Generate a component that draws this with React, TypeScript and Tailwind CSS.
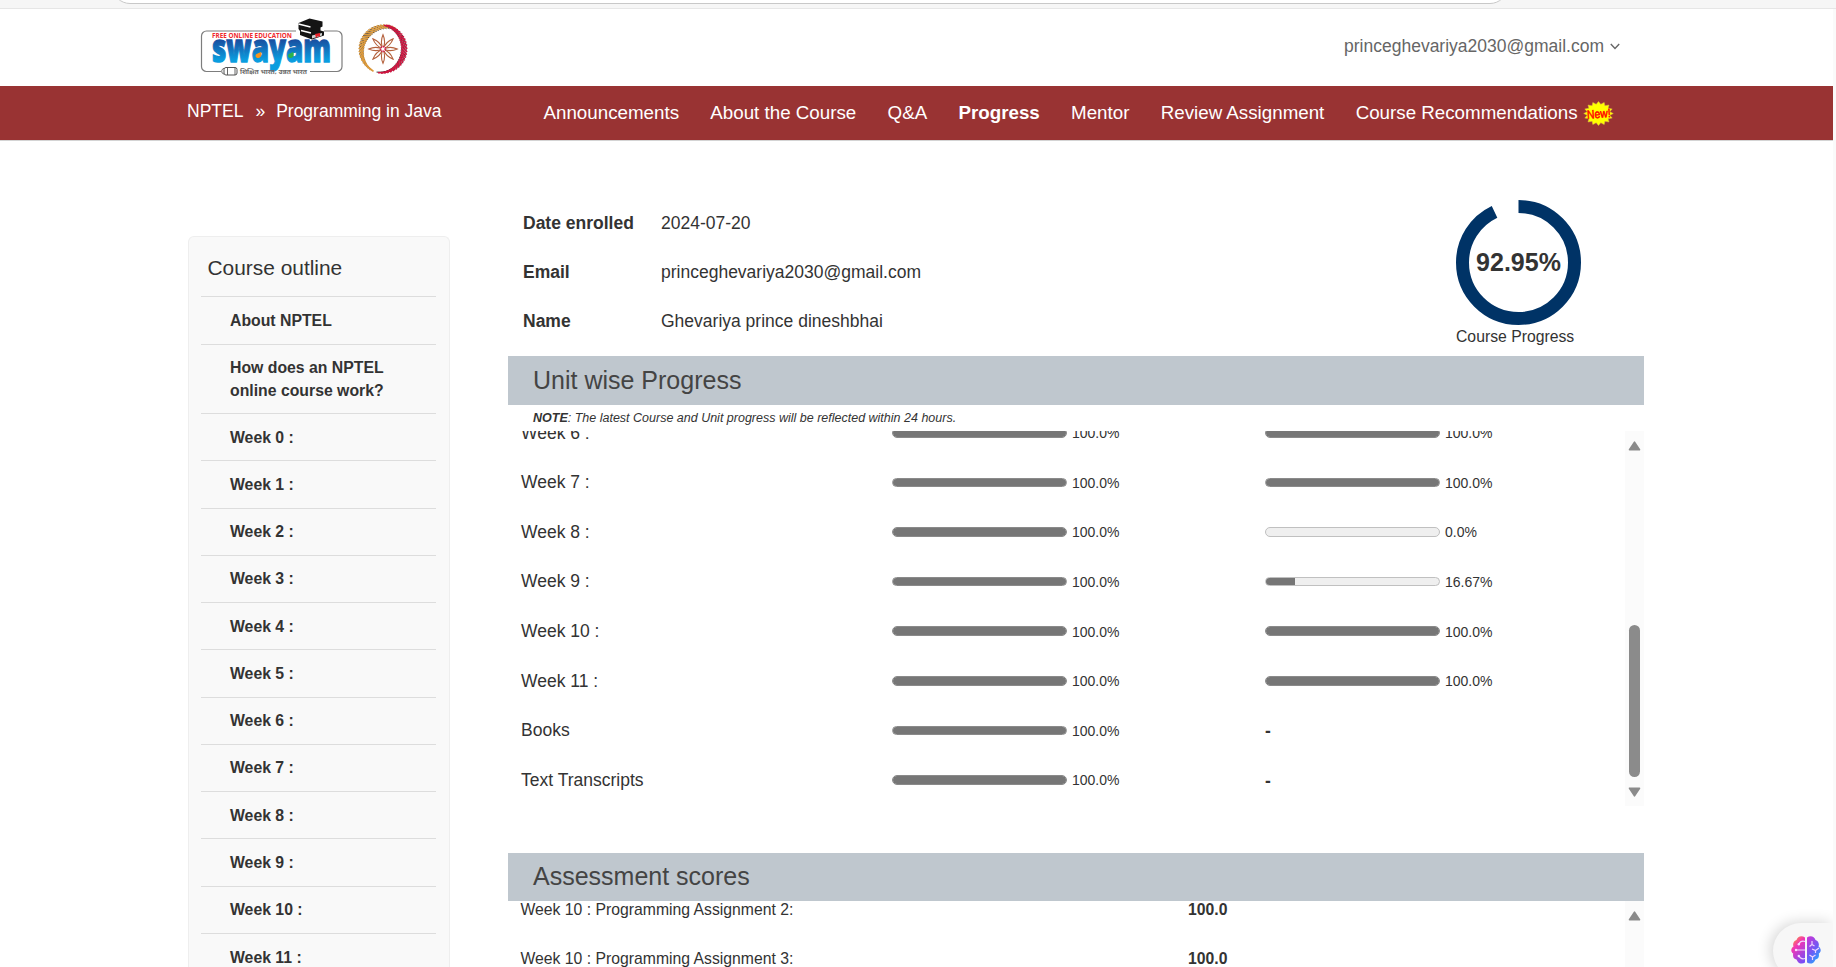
import React from "react";

const navItems = ["Announcements", "About the Course", "Q&A", "Progress", "Mentor", "Review Assignment", "Course Recommendations"];

const outline = [
  "Week 0 :", "Week 1 :", "Week 2 :", "Week 3 :", "Week 4 :", "Week 5 :", "Week 6 :",
  "Week 7 :", "Week 8 :", "Week 9 :", "Week 10 :", "Week 11 :",
];

type Unit = { name: string; lessons: number; assessment: number | null; assessmentLabel?: string };

const units: Unit[] = [
  { name: "Week 6 :", lessons: 100, assessment: 100 },
  { name: "Week 7 :", lessons: 100, assessment: 100 },
  { name: "Week 8 :", lessons: 100, assessment: 0 },
  { name: "Week 9 :", lessons: 100, assessment: 16.67, assessmentLabel: "16.67%" },
  { name: "Week 10 :", lessons: 100, assessment: 100 },
  { name: "Week 11 :", lessons: 100, assessment: 100 },
  { name: "Books", lessons: 100, assessment: null },
  { name: "Text Transcripts", lessons: 100, assessment: null },
];

const scores = [
  { name: "Week 10 : Programming Assignment 2:", score: "100.0" },
  { name: "Week 10 : Programming Assignment 3:", score: "100.0" },
];

function SwayamLogo() {
  return (
    <svg width="144" height="62" viewBox="0 0 144 62" className="block">
      <defs>
        <linearGradient id="sw" x1="0" y1="0" x2="0" y2="1">
          <stop offset="0.300" stopColor="#1c4296" />
          <stop offset="0.750" stopColor="#0a9ddf" />
        </linearGradient>
      </defs>
      <path d="M21 56.500H6.500a5 5 0 0 1-5-5V21a5 5 0 0 1 5-5H96M124 16h13a5 5 0 0 1 5 5v30.500a5 5 0 0 1-5 5H110" fill="none" stroke="#7d7d7d" strokeWidth="1.200" />
      <text x="12" y="22.600" fontFamily="Open Sans" fontWeight="700" fontSize="6.400" fill="#f0282d" textLength="80" lengthAdjust="spacingAndGlyphs">FREE ONLINE EDUCATION</text>
      <text x="12" y="47" fontFamily="Open Sans" fontWeight="800" fontSize="38" fill="url(#sw)" stroke="url(#sw)" strokeWidth="1.300" textLength="119" lengthAdjust="spacingAndGlyphs">swayam</text>
      <path d="M61 37c1 3 0 5.500-2.500 6s-4-2.500-2-4z" fill="#f7941d" />
      <path d="M93 37c1.500 3 .500 5.500-2 6s-4-2.500-2-4z" fill="#2bb24c" />
      <path d="M98.500 8l11-4.500 13 3v5l-2 1v3l3.500 1v4l-12 4-12-4.500v-4l-1.500-2z" fill="#141414" />
      <path d="M98.500 9l12 3M101 15.500l10 2.500" fill="none" stroke="#fff" strokeWidth="1.300" />
      <path d="M112 20.500l10-2.500v2.500l-10 3z" fill="#cfcfcf" />
      <path d="M115 19l5-1v4l-2-1-2 2z" fill="#e8222a" />
      <rect x="24" y="52.500" width="13" height="7.500" rx="2" fill="#fff" stroke="#555" strokeWidth="1" />
      <path d="M27.500 52.500v7.500M35 52.500v7.500M24 53.500c-3 0-3 5.500 0 5.500" fill="none" stroke="#555" strokeWidth="0.900" />
      <text x="40" y="58.800" fontFamily="Noto Sans Devanagari, Noto Sans, sans-serif" fontWeight="700" fontSize="5.500" fill="#6a6a6a" textLength="67" lengthAdjust="spacingAndGlyphs">शिक्षित भारत, उन्नत भारत</text>
    </svg>
  );
}

function point(deg: number, r: number) {
  const a = (deg * Math.PI) / 180;
  return [25 + r * Math.sin(a), 25 - r * Math.cos(a)];
}

function arcTicks(start: number, end: number, color: string, slant: number) {
  const n = 25;
  return Array.from({ length: n }, (_, i) => {
    const t = i / (n - 1);
    const deg = start + (end - start) * t;
    const w = 0.8 + 5.2 * Math.sin(Math.PI * t);
    const [x1, y1] = point(deg, 24.3);
    const [x2, y2] = point(deg + slant, 24.3 - w);
    const [x3, y3] = point(deg + 3.6, 24);
    const [x4, y4] = point(deg + 3.6 + slant, 24 - w);
    return (
      <g key={i}>
        <line x1={x3} y1={y3} x2={x4} y2={y4} stroke="#2a2020" strokeWidth="0.900" />
        <line x1={x1} y1={y1} x2={x2} y2={y2} stroke={color} strokeWidth="1.700" />
      </g>
    );
  });
}

function NptelLogo() {
  return (
    <svg width="50" height="50" viewBox="0 0 50 50" className="block">
      {arcTicks(203, 382, "#dd9b3c", 14)}
      {arcTicks(16, 192, "#cf1540", -14)}
      {[0, 45, 90, 135, 180, 225, 270, 315].map((r) => (
        <path key={r} d="M25 25C22.800 20 23.300 14.500 25 10.700C26.700 14.500 27.200 20 25 25Z" transform={`rotate(${r} 25 25)`} fill="#fff" stroke="#b4603c" strokeWidth="1.100" />
      ))}
      <circle cx="25" cy="25" r="2.400" fill="#fff" stroke="#d0204a" strokeWidth="1.800" strokeDasharray="1.200 .8" />
    </svg>
  );
}

function NewBadge() {
  const pts = Array.from({ length: 32 }, (_, i) => {
    const a = (i / 32) * Math.PI * 2;
    const k = i % 2 ? 0.78 : 1;
    return `${(15.5 + 14.8 * k * Math.cos(a)).toFixed(1)},${(12.5 + 12 * k * Math.sin(a)).toFixed(1)}`;
  }).join(" ");
  return (
    <svg width="31" height="25" viewBox="0 0 31 25" className="ml-[5px] block">
      <polygon points={pts} fill="#ffff00" stroke="#d8b848" strokeWidth="0.500" />
      <text x="4" y="17" fontFamily="Liberation Sans" fontSize="12" fill="#f00" stroke="#f00" strokeWidth="0.500" textLength="23.500" lengthAdjust="spacingAndGlyphs" transform="rotate(-4 15 13)">New!</text>
    </svg>
  );
}

function Brain() {
  return (
    <svg width="30" height="28" viewBox="0 0 30 28" className="block">
      <defs>
        <linearGradient id="bl" x1="0.200" y1="0" x2="0.700" y2="1">
          <stop offset="0" stopColor="#ff9a2e" />
          <stop offset="0.350" stopColor="#f235b4" />
          <stop offset="1" stopColor="#7a4df5" />
        </linearGradient>
        <linearGradient id="br" x1="0.200" y1="0" x2="0.800" y2="1">
          <stop offset="0" stopColor="#c438d8" />
          <stop offset="0.500" stopColor="#6f5bf5" />
          <stop offset="1" stopColor="#1fb0ff" />
        </linearGradient>
      </defs>
      <path d="M14 1.500C11-1 6.500 0 5.500 4C2.500 5 1.500 8 2.500 10.500C-.500 12.500-.300 16 2.200 17.500C1.500 21 3 23 5.500 23.500C7 28 11.500 28.500 14 26.500Z" fill="url(#bl)" />
      <path d="M16 1.500C19-1 23.500 0 24.500 4C27.500 5 28.500 8 27.500 10.500C30.500 12.500 30.300 16 27.800 17.500C28.500 21 27 23 24.500 23.500C23 28 18.500 28.500 16 26.500Z" fill="url(#br)" />
      <path d="M14 5.500c-3-.800-5 .200-6 2.500M14 14H5M14 22.500c-3 .800-5-.300-6-2.500M21 5v3.500l-2.500 2M21 8.500l2.500 1.500M21 13l3.500 1.500L28 12M24.500 14.500V17M18.500 19l3 2 3-2M21.500 21v3" fill="none" stroke="#f3d5ff" strokeWidth="1.200" />
      <circle cx="7.800" cy="8.200" r="1.200" fill="#f9dcff" />
      <circle cx="5" cy="14" r="1.200" fill="#f9dcff" />
      <circle cx="7.800" cy="20" r="1.200" fill="#f9dcff" />
    </svg>
  );
}

function Bar({ value, label }: { value: number; label?: string }) {
  return (
    <div className="flex items-center">
      <div className="h-[9.5px] w-[175px] overflow-hidden rounded-full border border-[#c0c0c0] bg-[#efefef]" style={value === 100 ? { borderColor: "#8a8a8a" } : undefined}>
        <div className="h-full bg-[#767676]" style={{ width: `${value}%` }} />
      </div>
      <span className="ml-[5px] mt-[1px] text-[14px] leading-5">{label ?? `${value.toFixed(1)}%`}</span>
    </div>
  );
}

function Arrow({ down = false }: { down?: boolean }) {
  return (
    <svg width="13" height="10" viewBox="0 0 13 10" className={down ? "block rotate-180" : "block"}>
      <path d="M6.500 1.200L11.500 8.800H1.500Z" fill="#8b8b8b" stroke="#8b8b8b" strokeWidth="1.600" strokeLinejoin="round" />
    </svg>
  );
}

function Info({ label, value }: { label: string; value: string }) {
  return (
    <div className="flex h-[49px] items-center">
      <dt className="w-[138px] font-bold">{label}</dt>
      <dd>{value}</dd>
    </div>
  );
}

export default function App() {
  return (
    <div className="relative flex h-[967px] w-[1836px] flex-col overflow-hidden bg-white font-['Liberation_Sans',Arial,sans-serif] text-[17.5px] text-[#333]">
      <div className="flex h-[9px] shrink-0 justify-center border-b border-[#e6e6e6] bg-[#f6f6f6] pr-[216px]">
        <div className="-mt-5 h-6 w-[1396px] rounded-b-[18px] border border-[#c8c8c8] bg-white" />
      </div>
      <div className="flex min-h-0 flex-1 flex-col border-r-[3px] border-[#fafafa]">
        <header className="flex h-[77px] shrink-0 justify-between pl-[200px] pr-[213px]">
          <div className="flex">
            <div className="pt-1.5"><SwayamLogo /></div>
            <div className="ml-[14px] pt-[15px]"><NptelLogo /></div>
          </div>
          <div className="flex h-[74px] items-center text-[#666]">
            princeghevariya2030@gmail.com
            <svg width="10" height="7" viewBox="0 0 10 7" className="ml-1.5"><path d="M.8 1L5 5.500L9.200 1" fill="none" stroke="#666" strokeWidth="1.400" /></svg>
          </div>
        </header>

        <nav className="flex h-[55px] shrink-0 border-b border-[#d4d4d4] bg-[#993333] pl-[187px] text-white">
          <div className="flex h-[50px] w-[356.5px] items-center">
            <span>NPTEL</span>
            <span className="ml-3">»</span>
            <span className="ml-[11px]">Programming in Java</span>
          </div>
          <div className="flex h-[54px] items-center gap-[31.3px] text-[18.75px]">
            {navItems.map((item) => (
              <a key={item} className={item === "Progress" ? "whitespace-nowrap font-bold" : "flex items-center whitespace-nowrap"}>
                {item}
                {item === "Course Recommendations" && <NewBadge />}
              </a>
            ))}
          </div>
        </nav>

        <div className="flex min-h-0 flex-1">
          <aside className="ml-[188px] mt-[95px] w-[262px] shrink-0 rounded-t-md border border-b-0 border-[#eeeeee] bg-[#f9f9f9] pl-3 pr-[13px]">
            <h2 className="flex h-[59px] items-center pl-[6.5px] pt-[3px] text-[20.9px]">Course outline</h2>
            <ul className="text-[15.8px] font-bold leading-[23px]">
              <li className="flex h-[48px] items-center border-t border-[#dddddd] pl-[29px]">About NPTEL</li>
              <li className="flex h-[69px] items-center border-t border-[#dddddd] pl-[29px]">How does an NPTEL<br />online course work?</li>
              {outline.map((w) => (
                <li key={w} className="flex h-[47.27px] items-center border-t border-[#dddddd] pl-[29px]">{w}</li>
              ))}
            </ul>
          </aside>

          <main className="ml-[58px] flex w-[1136px] shrink-0 flex-col">
            <section className="flex h-[215px] shrink-0 justify-between">
              <dl className="pl-[15px] pt-[58px]">
                <Info label="Date enrolled" value="2024-07-20" />
                <Info label="Email" value="princeghevariya2030@gmail.com" />
                <Info label="Name" value="Ghevariya prince dineshbhai" />
              </dl>
              <div className="mr-[63px] mt-[59px] w-[125px]">
                <svg width="125" height="125" viewBox="0 0 125 125" className="block">
                  <circle cx="62.500" cy="62.500" r="56" fill="none" stroke="#003366" strokeWidth="13" pathLength="100" strokeDasharray="92.95 7.05" transform="rotate(-90 62.500 62.500)" />
                  <text x="62.500" y="71" textAnchor="middle" fontSize="25" fontWeight="700" fill="#333">92.95%</text>
                </svg>
                <p className="text-[15.75px] leading-[23px]">Course Progress</p>
              </div>
            </section>

            <h2 className="flex h-[49px] shrink-0 items-center bg-[#bfc7ce] pl-[25px] text-[25px] text-[#444]">Unit wise Progress</h2>
            <p className="flex h-[26px] shrink-0 items-center whitespace-pre pl-[25px] text-[12.5px] italic"><b>NOTE</b>: The latest Course and Unit progress will be reflected within 24 hours.</p>
            <section className="flex h-[375px] shrink-0 overflow-hidden">
              <div className="-mt-[23px] flex-1">
                {units.map((u) => (
                  <div key={u.name} className="grid h-[49.6px] grid-cols-[371px_373px_1fr] items-center pl-[13px]">
                    <span>{u.name}</span>
                    <Bar value={u.lessons} />
                    {u.assessment === null ? <span className="pt-0.5 font-bold">-</span> : <Bar value={u.assessment} label={u.assessmentLabel} />}
                  </div>
                ))}
              </div>
              <div className="flex w-[19px] flex-col items-center bg-[#fbfbfb] pt-[10px]">
                <Arrow />
                <div className="mt-[174px] h-[152px] w-[11px] rounded-full bg-[#8b8b8b]" />
                <div className="mt-[10px]"><Arrow down /></div>
              </div>
            </section>

            <h2 className="mt-[47px] flex h-[48px] shrink-0 items-center bg-[#bfc7ce] pl-[25px] text-[25px] text-[#444]">Assessment scores</h2>
            <section className="flex min-h-0 flex-1 overflow-hidden">
              <div className="-mt-4 flex-1">
                {scores.map((s) => (
                  <div key={s.name} className="grid h-[49px] grid-cols-[667.5px_1fr] items-center pl-[12.5px] text-[15.75px]">
                    <span>{s.name}</span>
                    <b>{s.score}</b>
                  </div>
                ))}
              </div>
              <div className="flex w-[19px] flex-col items-center bg-[#fbfbfb] pt-[10px]"><Arrow /></div>
            </section>
          </main>
        </div>
      </div>
      <button className="absolute bottom-[-12px] right-[3px] flex h-[56px] w-[60px] rounded-l-full bg-[#f7f7f7] pl-[18px] pt-[13px] shadow-[-3px_-1px_14px_rgba(0,0,0,0.16)] [clip-path:inset(-30px_0_0_-30px)]">
        <Brain />
      </button>
    </div>
  );
}
